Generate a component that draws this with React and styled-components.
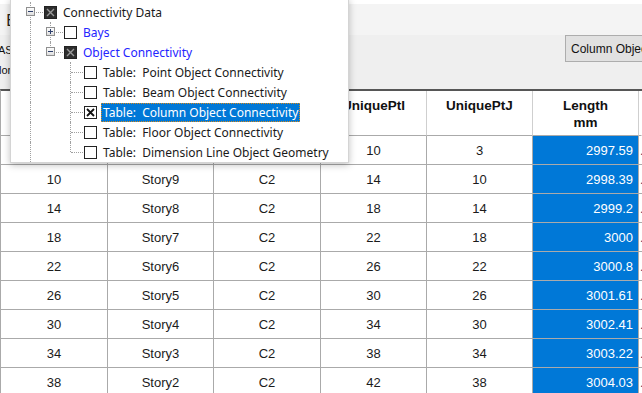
import styled, { createGlobalStyle } from "styled-components";

const GlobalStyle = createGlobalStyle`
  html, body {
    margin: 0;
    padding: 0;
    background: #ffffff;
    overflow: hidden;
  }
`;

const columns = [
  { key: "name", title: "Unique Name" },
  { key: "story", title: "Story" },
  { key: "label", title: "Label" },
  { key: "ptI", title: "UniquePtI" },
  { key: "ptJ", title: "UniquePtJ" },
  { key: "length", title: "Length", unit: "mm" },
];

const rows = [
  { name: "6", story: "Story10", label: "C2", ptI: "10", ptJ: "3", length: "2997.59" },
  { name: "10", story: "Story9", label: "C2", ptI: "14", ptJ: "10", length: "2998.39" },
  { name: "14", story: "Story8", label: "C2", ptI: "18", ptJ: "14", length: "2999.2" },
  { name: "18", story: "Story7", label: "C2", ptI: "22", ptJ: "18", length: "3000" },
  { name: "22", story: "Story6", label: "C2", ptI: "26", ptJ: "22", length: "3000.8" },
  { name: "26", story: "Story5", label: "C2", ptI: "30", ptJ: "26", length: "3001.61" },
  { name: "30", story: "Story4", label: "C2", ptI: "34", ptJ: "30", length: "3002.41" },
  { name: "34", story: "Story3", label: "C2", ptI: "38", ptJ: "34", length: "3003.22" },
  { name: "38", story: "Story2", label: "C2", ptI: "42", ptJ: "38", length: "3004.03" },
];

// tree rows: guides = line style per ancestor slot ("full" | "none"), own = "full" | "top"
const tree = [
  { level: 0, label: "Connectivity Data", expander: "minus", check: "mixed", guides: [], own: "full" },
  { level: 1, label: "Bays", expander: "plus", check: "none", blue: true, guides: ["full"], own: "full" },
  { level: 1, label: "Object Connectivity", expander: "minus", check: "mixed", blue: true, guides: ["full"], own: "top" },
  { level: 2, label: "Table:  Point Object Connectivity", check: "none", guides: ["full", "none"], own: "full" },
  { level: 2, label: "Table:  Beam Object Connectivity", check: "none", guides: ["full", "none"], own: "full" },
  { level: 2, label: "Table:  Column Object Connectivity", check: "checked", selected: true, guides: ["full", "none"], own: "full" },
  { level: 2, label: "Table:  Floor Object Connectivity", check: "none", guides: ["full", "none"], own: "full" },
  { level: 2, label: "Table:  Dimension Line Object Geometry", check: "none", guides: ["full", "none"], own: "top" },
];

const Page = styled.div`
  position: relative;
  width: 642px;
  height: 393px;
  overflow: hidden;
  background: #efefef;
  font-family: "Liberation Sans", Arial, sans-serif;
`;

const MenuBar = styled.div`
  height: 31px;
  border-top: 4px solid #ffffff;
  background: #f4f4f4;
  padding-left: 6px;
  display: flex;
  align-items: center;
  font-family: "Noto Sans", sans-serif;
  font-size: 16px;
  color: #2b2216;
`;

const ToolBar = styled.div`
  height: 54px;
  display: flex;
  justify-content: space-between;
  align-items: flex-start;
`;

const ToolLabels = styled.div`
  display: flex;
  flex-direction: column;
  gap: 7px;
  padding-top: 9px;
  font-size: 11px;
  color: #111;
  line-height: 13px;
`;

const ClippedLabel = styled.span`
  margin-left: ${(p) => p.$shift}px;
  white-space: nowrap;
`;

const TableButton = styled.div`
  box-sizing: border-box;
  width: 117px;
  height: 27px;
  margin-right: -40px;
  background: #e1e1e1;
  border: 1px solid #adadad;
  font-size: 12px;
  color: #111;
  display: flex;
  align-items: center;
  padding-left: 5px;
  white-space: nowrap;
  overflow: hidden;
`;

const Grid = styled.div`
  display: grid;
  grid-template-columns: 107px 106px 107px 106px 106px 106px 1fr;
  border-top: 2px solid #565656;
  border-left: 1px solid #aaaaaa;
  background: #ffffff;
`;

const HeadCell = styled.div`
  height: 45px;
  box-sizing: border-box;
  border-right: 1px solid ${(p) => (p.$last ? "transparent" : "#cfcfcf")};
  border-bottom: 1px solid #aaaaaa;
  display: flex;
  flex-direction: column;
  align-items: center;
  padding-top: 6px;
  font-weight: bold;
  font-size: 13.5px;
  line-height: 17px;
  color: #111;
  overflow: hidden;
  white-space: nowrap;
`;

const Cell = styled.div`
  height: 29px;
  box-sizing: border-box;
  border-right: 1px solid #aaaaaa;
  border-bottom: 1px solid #aaaaaa;
  display: flex;
  align-items: center;
  justify-content: ${(p) => (p.$highlight ? "flex-end" : "center")};
  padding-right: ${(p) => (p.$highlight ? "5px" : "0")};
  background: ${(p) => (p.$highlight ? "#0078d7" : "#ffffff")};
  color: ${(p) => (p.$highlight ? "#ffffff" : "#1b1b1b")};
  font-size: 13px;
  overflow: hidden;
  white-space: nowrap;
`;

const EdgeCell = styled(Cell)`
  justify-content: flex-start;
  padding-left: 1px;
  border-right: none;
  color: #4a2a5a;
`;

const Popup = styled.div`
  position: absolute;
  left: 10px;
  top: -2px;
  width: 339px;
  height: 165px;
  box-sizing: border-box;
  padding-top: 3px;
  padding-left: 10px;
  background: #ffffff;
  border: 1px solid #d4d4d4;
  box-shadow: 0 2px 7px rgba(0, 0, 0, 0.25);
  font-family: "Noto Sans", "Open Sans", sans-serif;
  font-size: 12px;
`;

const TreeRow = styled.div`
  display: flex;
  align-items: center;
  height: 20px;
`;

const Slot = styled.div`
  position: relative;
  width: 20px;
  height: 20px;
  flex: none;

  &::before {
    content: "";
    position: absolute;
    left: 9px;
    top: 0;
    height: ${(p) => (p.$line === "full" ? "20px" : p.$line === "top" ? "10px" : "0")};
    border-left: ${(p) => (p.$line === "none" ? "none" : "1px dotted #a0a0a0")};
  }

  &::after {
    content: "";
    position: absolute;
    left: 10px;
    top: 10px;
    width: ${(p) => (p.$own ? "12px" : "0")};
    border-top: ${(p) => (p.$own ? "1px dotted #a0a0a0" : "none")};
  }
`;

const Expander = styled.svg`
  position: absolute;
  left: 5px;
  top: 5px;
  z-index: 1;
`;

const CheckBox = styled.svg`
  flex: none;
  margin-left: 3px;
  position: relative;
`;

const Label = styled.span`
  margin-left: 4px;
  padding: 0 2px;
  height: 19px;
  line-height: 19px;
  box-sizing: border-box;
  white-space: pre;
  color: ${(p) => (p.$selected ? "#ffffff" : p.$blue ? "#2424ff" : "#1a1a1a")};
  background: ${(p) => (p.$selected ? "#0078d7" : "transparent")};
  outline: ${(p) => (p.$selected ? "1px dotted #d9891a" : "none")};
  outline-offset: -1px;
`;

function ExpanderIcon({ kind }) {
  return (
    <Expander width="9" height="9" viewBox="0 0 9 9">
      <defs>
        <linearGradient id="expg" x1="0" y1="0" x2="0" y2="1">
          <stop offset="0" stopColor="#ffffff" />
          <stop offset="1" stopColor="#dcdcdc" />
        </linearGradient>
      </defs>
      <rect x="0.5" y="0.5" width="8" height="8" fill="url(#expg)" stroke="#8f8f8f" />
      <path d="M2 4.5h5" stroke="#2c3e6b" />
      {kind === "plus" && <path d="M4.5 2v5" stroke="#2c3e6b" />}
    </Expander>
  );
}

function CheckIcon({ state }) {
  const dark = state === "mixed";
  return (
    <CheckBox width="13" height="13" viewBox="0 0 13 13">
      <rect x="0.5" y="0.5" width="12" height="12" fill={dark ? "#2e2e2e" : "#ffffff"} stroke="#222" />
      {state !== "none" && (
        <path
          d="M3 3l7 7M10 3l-7 7"
          stroke={dark ? "#9a9a9a" : "#111"}
          strokeWidth={dark ? 1.4 : 1.8}
        />
      )}
    </CheckBox>
  );
}

function TreeItem({ item }) {
  return (
    <TreeRow>
      {item.guides.map((g, i) => (
        <Slot key={i} $line={g} />
      ))}
      <Slot $line={item.own} $own>
        {item.expander && <ExpanderIcon kind={item.expander} />}
      </Slot>
      <CheckIcon state={item.check} />
      <Label $blue={item.blue} $selected={item.selected}>
        {item.label}
      </Label>
    </TreeRow>
  );
}

export default function App() {
  return (
    <>
      <GlobalStyle />
      <Page>
        <MenuBar>Edit</MenuBar>
        <ToolBar>
          <ToolLabels>
            <ClippedLabel $shift={-2}>ASCII</ClippedLabel>
            <ClippedLabel $shift={-15}>Color</ClippedLabel>
          </ToolLabels>
          <TableButton>Column Object Connectivity</TableButton>
        </ToolBar>
        <Grid>
          {columns.map((c) => (
            <HeadCell key={c.key}>
              <span>{c.title}</span>
              {c.unit && <span>{c.unit}</span>}
            </HeadCell>
          ))}
          <HeadCell $last />
          {rows.map((r) => (
            <>
              {columns.map((c) => (
                <Cell key={r.name + c.key} $highlight={c.key === "length"}>
                  {r[c.key]}
                </Cell>
              ))}
              <EdgeCell key={r.name + "edge"}>.</EdgeCell>
            </>
          ))}
        </Grid>
        <Popup>
          {tree.map((item) => (
            <TreeItem key={item.label} item={item} />
          ))}
        </Popup>
      </Page>
    </>
  );
}
